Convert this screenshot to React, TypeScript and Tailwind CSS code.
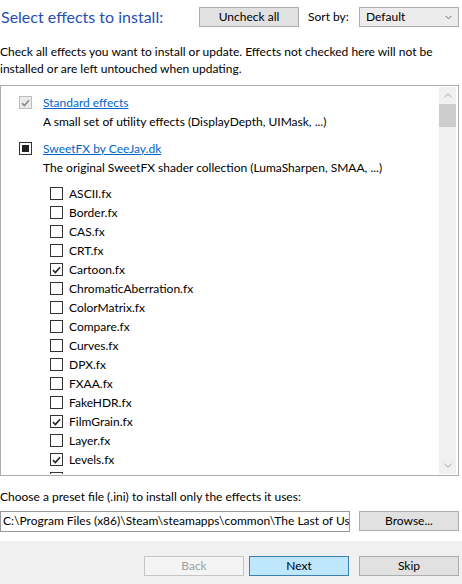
import React from 'react';

type CheckState = 'off' | 'on' | 'mixed' | 'disabled';

const effects: { name: string; checked: boolean }[] = [
  { name: 'ASCII.fx', checked: false },
  { name: 'Border.fx', checked: false },
  { name: 'CAS.fx', checked: false },
  { name: 'CRT.fx', checked: false },
  { name: 'Cartoon.fx', checked: true },
  { name: 'ChromaticAberration.fx', checked: false },
  { name: 'ColorMatrix.fx', checked: false },
  { name: 'Compare.fx', checked: false },
  { name: 'Curves.fx', checked: false },
  { name: 'DPX.fx', checked: false },
  { name: 'FXAA.fx', checked: false },
  { name: 'FakeHDR.fx', checked: false },
  { name: 'FilmGrain.fx', checked: true },
  { name: 'Layer.fx', checked: false },
  { name: 'Levels.fx', checked: true },
  { name: 'LiftGammaGain.fx', checked: false },
];

function CheckBox({ state }: { state: CheckState }) {
  if (state === 'disabled') {
    return (
      <div className="w-[13px] h-[13px] shrink-0 border border-[#bcbcbc] bg-[#ececec] flex items-center justify-center">
        <svg width="9" height="8" viewBox="0 0 9 8">
          <path d="M1 4.2 L3.4 6.5 L8 1.2" fill="none" stroke="#8a8a8a" strokeWidth="1.6" />
        </svg>
      </div>
    );
  }
  return (
    <div className="w-[13px] h-[13px] shrink-0 border border-[#333333] bg-white flex items-center justify-center">
      {state === 'on' && (
        <svg width="9" height="8" viewBox="0 0 9 8">
          <path d="M1 4.2 L3.4 6.5 L8 1.2" fill="none" stroke="#222222" strokeWidth="1.6" />
        </svg>
      )}
      {state === 'mixed' && <div className="w-[7px] h-[7px] bg-[#222222]" />}
    </div>
  );
}

function WinButton({ label, className = '' }: { label: string; className?: string }) {
  return (
    <div
      className={`w-[100px] h-[20px] shrink-0 border flex items-center justify-center text-[12px] ${className || 'bg-[#e1e1e1] border-[#adadad] text-black'}`}
    >
      {label}
    </div>
  );
}

export default function App() {
  return (
    <div className="w-[462px] h-[584px] flex flex-col bg-white overflow-hidden text-[12px] text-black font-['Lato','Noto_Sans',sans-serif]">
      {/* header */}
      <div className="flex items-center h-[20px] mt-[7px]">
        <div className="w-[199px] pl-[1px] text-[16px] text-[#1f4fb5] whitespace-nowrap leading-none">
          Select effects to install:
        </div>
        <WinButton label="Uncheck all" />
        <div className="w-[60px] pl-[9px] whitespace-nowrap">Sort by:</div>
        <div className="w-[100px] h-[20px] border border-[#adadad] bg-[#ececec] flex items-center justify-between pl-[6px] pr-[6px]">
          <span>Default</span>
          <svg width="7" height="5" viewBox="0 0 7 5">
            <path d="M0.5 0.8 L3.5 3.8 L6.5 0.8" fill="none" stroke="#707070" strokeWidth="1" />
          </svg>
        </div>
      </div>

      {/* description */}
      <p className="mt-[16px] leading-[17px] whitespace-nowrap">
        Check all effects you want to install or update. Effects not checked here will not be
        <br />
        installed or are left untouched when updating.
      </p>

      {/* effects list */}
      <div className="mt-[8px] w-[459px] h-[391px] border border-[#acacac] p-[1px] flex overflow-hidden">
        <div className="flex-1 overflow-hidden pt-[6px]">
          <div className="flex items-center h-[19px] pl-[17px] gap-[11px]">
            <CheckBox state="disabled" />
            <span className="text-[#0066cc] underline">Standard effects</span>
          </div>
          <div className="h-[19px] pl-[41px] flex items-center whitespace-nowrap">
            A small set of utility effects (DisplayDepth, UIMask, ...)
          </div>

          <div className="flex items-center h-[19px] pl-[17px] gap-[11px] mt-[8px]">
            <CheckBox state="mixed" />
            <span className="text-[#0066cc] underline">SweetFX by CeeJay.dk</span>
          </div>
          <div className="h-[19px] pl-[41px] flex items-center whitespace-nowrap">
            The original SweetFX shader collection (LumaSharpen, SMAA, ...)
          </div>

          <div className="mt-[7px] flex flex-col">
            {effects.map((fx) => (
              <div key={fx.name} className="flex items-center h-[19px] pl-[48px] gap-[6px] shrink-0">
                <CheckBox state={fx.checked ? 'on' : 'off'} />
                <span>{fx.name}</span>
              </div>
            ))}
          </div>
        </div>

        {/* scrollbar */}
        <div className="w-[17px] bg-[#f0f0f0] flex flex-col mr-[1px]">
          <div className="h-[17px] flex items-center justify-center">
            <svg width="8" height="5" viewBox="0 0 8 5">
              <path d="M0.5 4.2 L4 0.8 L7.5 4.2" fill="none" stroke="#a3a3a3" strokeWidth="1" />
            </svg>
          </div>
          <div className="h-[23px] bg-[#cdcdcd]" />
          <div className="flex-1" />
          <div className="h-[17px] flex items-center justify-center">
            <svg width="8" height="5" viewBox="0 0 8 5">
              <path d="M0.5 0.8 L4 4.2 L7.5 0.8" fill="none" stroke="#a3a3a3" strokeWidth="1" />
            </svg>
          </div>
        </div>
      </div>

      {/* preset */}
      <p className="mt-[12px] leading-[17px] whitespace-nowrap">
        Choose a preset file (.ini) to install only the effects it uses:
      </p>
      <div className="mt-[5px] flex items-center h-[22px]">
        <div className="w-[350px] h-[21px] border border-[#9a9a9a] pl-[2px] flex items-center overflow-hidden whitespace-nowrap">
          C:\Program Files (x86)\Steam\steamapps\common\The Last of Us
        </div>
        <div className="ml-[9px]">
          <WinButton label="Browse..." />
        </div>
      </div>

      {/* footer */}
      <div className="mt-[9px] flex-1 bg-[#f0f0f0] flex items-start justify-end pt-[15px] pr-[3px] gap-[5px]">
        <WinButton label="Back" className="bg-[#f4f4f4] border-[#c6c6c6] text-[#a0a0a0]" />
        <WinButton label="Next" className="bg-[#bee6fd] border-[#3c7fb1] text-black" />
        <div className="ml-[5px]">
          <WinButton label="Skip" />
        </div>
      </div>
    </div>
  );
}
